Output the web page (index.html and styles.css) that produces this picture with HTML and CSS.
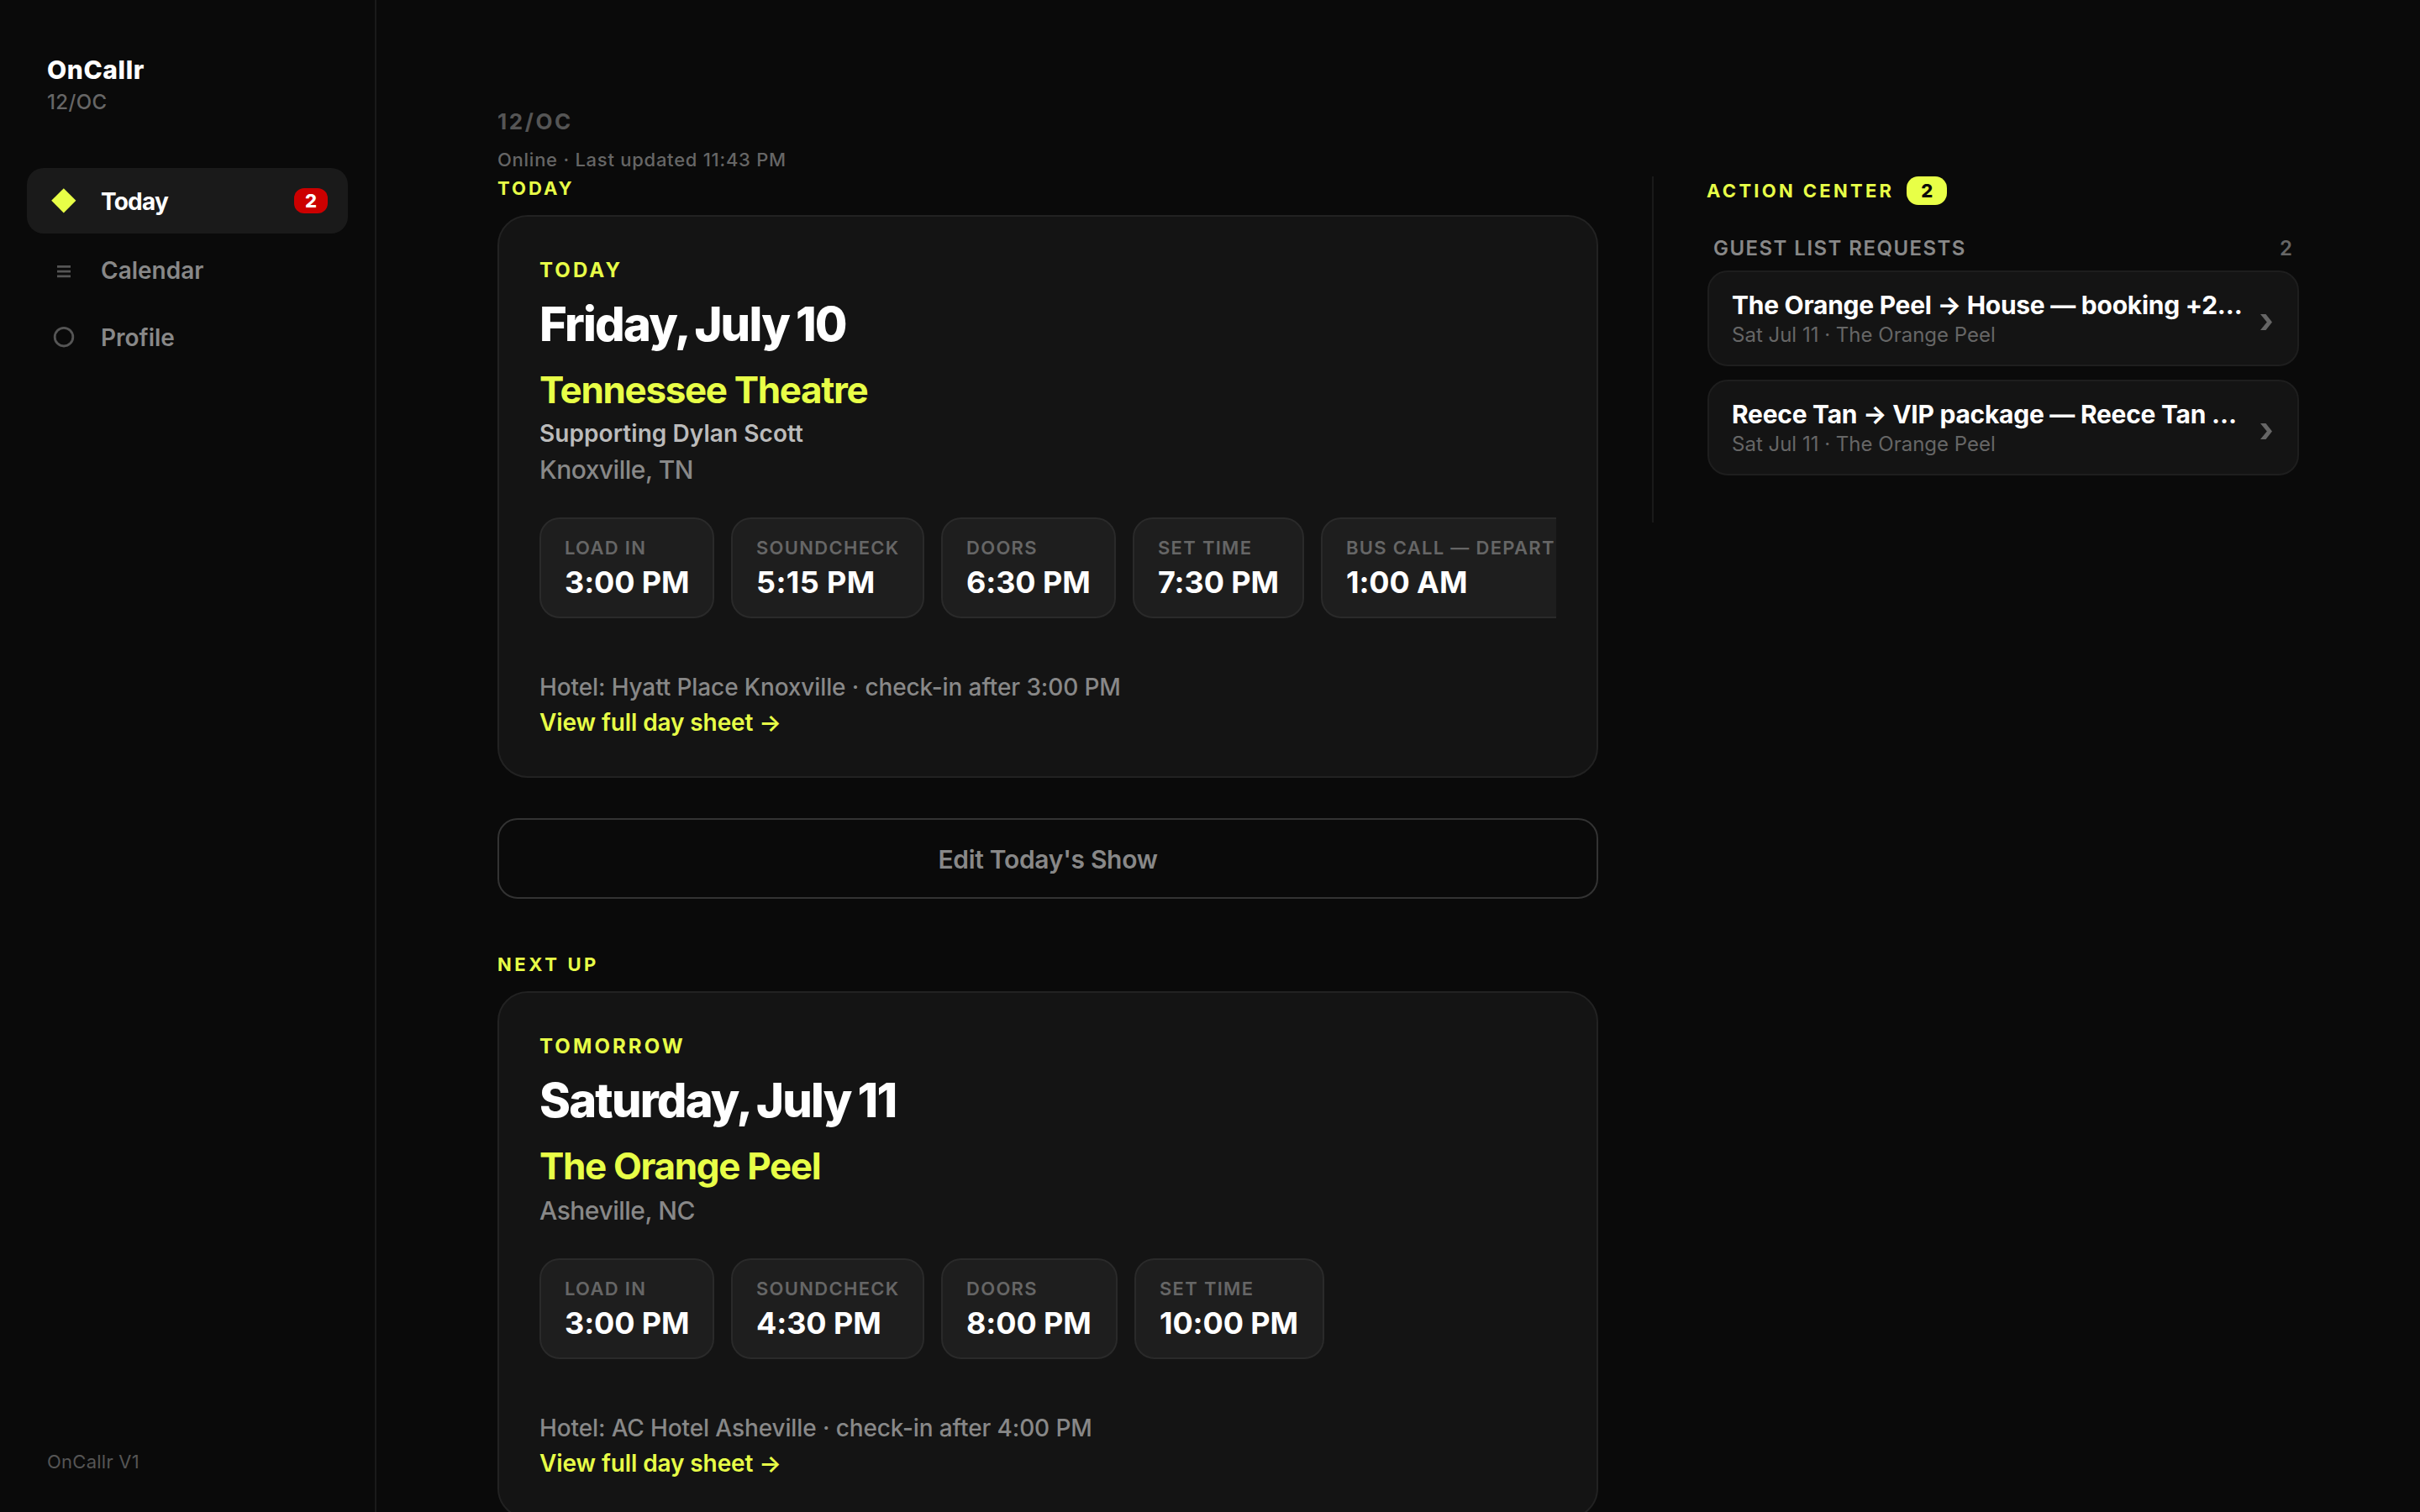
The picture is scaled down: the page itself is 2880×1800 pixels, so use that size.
FILE: index.html
```html
<!DOCTYPE html>
<html lang="en">
<head>
  <meta charset="UTF-8">
  <meta name="viewport" content="width=device-width, initial-scale=1.0">
  <title>OnCallr</title>
  <link rel="stylesheet" href="styles.css">
</head>
<body>
  <div class="app">
    <!-- Sidebar -->
    <aside class="sidebar">
      <div class="brand">
        <div class="brand-name">OnCallr</div>
        <div class="brand-org">12/OC</div>
      </div>
      <nav class="nav">
        <a class="nav-item active">
          <svg class="nav-icon" viewBox="0 0 32 32"><path d="M15.8 1.2 30.4 15.8 15.8 30.4 1.2 15.8z" fill="#e8ff47"/></svg>
          <span class="nav-label nav-today">Today</span>
          <span class="nav-badge">2</span>
        </a>
        <a class="nav-item calendar">
          <svg class="nav-icon" viewBox="0 0 32 32"><path d="M8 11.3h16M8 17.1h16M8 22.9h16" stroke="#555" stroke-width="2.7"/></svg>
          <span class="nav-label">Calendar</span>
        </a>
        <a class="nav-item profile">
          <svg class="nav-icon" viewBox="0 0 32 32"><circle cx="16" cy="15.2" r="10.8" fill="none" stroke="#555" stroke-width="2.8"/></svg>
          <span class="nav-label">Profile</span>
        </a>
      </nav>
      <div class="version">OnCallr V1</div>
    </aside>

    <!-- Main content -->
    <main class="main">
      <div class="shows">
        <div class="org">12/OC</div>
        <div class="sync-status">Online · Last updated 11:43 PM</div>

        <div class="section-label tight">TODAY</div>
        <section class="card">
          <div class="day-label">TODAY</div>
          <h1 class="date">Friday, July 10</h1>
          <h2 class="venue">Tennessee Theatre</h2>
          <div class="support">Supporting Dylan Scott</div>
          <div class="city">Knoxville, TN</div>
          <div class="times">
            <div class="time"><span class="time-label">LOAD IN</span><span class="time-value">3:00 PM</span></div>
            <div class="time"><span class="time-label">SOUNDCHECK</span><span class="time-value wide">5:15 PM</span></div>
            <div class="time"><span class="time-label">DOORS</span><span class="time-value">6:30 PM</span></div>
            <div class="time"><span class="time-label">SET TIME</span><span class="time-value">7:30 PM</span></div>
            <div class="time"><span class="time-label">BUS CALL — DEPART</span><span class="time-value">1:00 AM</span></div>
          </div>
          <div class="hotel">Hotel: Hyatt Place Knoxville · check-in after 3:00 PM</div>
          <a class="day-sheet">View full day sheet →</a>
        </section>

        <button class="edit-button">Edit Today's Show</button>

        <div class="section-label next-up">NEXT UP</div>
        <section class="card">
          <div class="day-label">TOMORROW</div>
          <h1 class="date">Saturday, July 11</h1>
          <h2 class="venue">The Orange Peel</h2>
          <div class="city">Asheville, NC</div>
          <div class="times times-next">
            <div class="time"><span class="time-label">LOAD IN</span><span class="time-value">3:00 PM</span></div>
            <div class="time"><span class="time-label">SOUNDCHECK</span><span class="time-value">4:30 PM</span></div>
            <div class="time"><span class="time-label">DOORS</span><span class="time-value">8:00 PM</span></div>
            <div class="time"><span class="time-label">SET TIME</span><span class="time-value">10:00 PM</span></div>
          </div>
          <div class="hotel">Hotel: AC Hotel Asheville · check-in after 4:00 PM</div>
          <a class="day-sheet">View full day sheet →</a>
        </section>
      </div>

      <!-- Action center -->
      <aside class="actions">
        <div class="actions-head">
          <span class="actions-title">ACTION CENTER</span>
          <span class="actions-count">2</span>
        </div>
        <div class="group-head">
          <span class="group-title">GUEST LIST REQUESTS</span>
          <span class="group-count">2</span>
        </div>
        <div class="request">
          <div class="request-text">
            <div class="request-title">The Orange Peel → House — booking +2…</div>
            <div class="request-sub">Sat Jul 11 · The Orange Peel</div>
          </div>
          <svg class="chevron" viewBox="0 0 14 19"><path d="M0 0h6.5L14 9.5 6.5 19H0l7.8-9.5z" fill="#666"/></svg>
        </div>
        <div class="request">
          <div class="request-text">
            <div class="request-title">Reece Tan → VIP package — Reece Tan …</div>
            <div class="request-sub">Sat Jul 11 · The Orange Peel</div>
          </div>
          <svg class="chevron" viewBox="0 0 14 19"><path d="M0 0h6.5L14 9.5 6.5 19H0l7.8-9.5z" fill="#666"/></svg>
        </div>
      </aside>
    </main>
  </div>
</body>
</html>
```
FILE: styles.css
```css
* {
  box-sizing: border-box;
}

body {
  margin: 0;
  background: #0a0a0a;
  color: #fff;
  font-family: Inter, "Liberation Sans", sans-serif;
  overflow: hidden;
}

.app {
  display: flex;
  height: 1800px;
  overflow: hidden;
}

/* Sidebar */
.sidebar {
  display: flex;
  flex-direction: column;
  width: 448px;
  flex-shrink: 0;
  padding: 64px 32px 40px;
  border-right: 2px solid #1a1a1a;
}

.brand {
  padding: 0 24px;
  height: 136px;
}

.brand-name {
  font-size: 30px;
  line-height: 38px;
  font-weight: 800;
  letter-spacing: 0.6px;
}

.brand-org {
  margin-top: 3px;
  font-size: 24px;
  line-height: 34px;
  font-weight: 500;
  letter-spacing: 0.4px;
  color: #666;
}

.nav {
  display: flex;
  flex-direction: column;
  gap: 4px;
}

.nav-item {
  display: flex;
  align-items: center;
  height: 78px;
  padding: 0 24px 0 28px;
  border-radius: 20px;
}

.nav-item.calendar {
  height: 80px;
}

.nav-item.profile {
  height: 72px;
}

.nav-item.active {
  background: #1a1a1a;
}

.nav-icon {
  width: 32px;
  height: 32px;
  margin-right: 28px;
}

.nav-label {
  font-size: 28px;
  line-height: 34px;
  font-weight: 600;
  color: #888;
}

.nav-item.active .nav-label {
  flex: 1;
  color: #fff;
  font-weight: 700;
}

.nav-item .nav-today {
  padding-top: 2px;
  letter-spacing: -0.8px;
}

.nav-badge {
  width: 40px;
  height: 30px;
  border-radius: 12px;
  background: #c00;
  font-size: 22px;
  line-height: 31px;
  font-weight: 800;
  text-align: center;
}

.version {
  margin-top: auto;
  padding: 0 24px;
  font-size: 22px;
  line-height: 40px;
  letter-spacing: 0.25px;
  color: #555;
}

/* Main */
.main {
  display: flex;
  align-items: flex-start;
  padding: 128px 144px 0;
}

.shows {
  width: 1310px;
}

.org {
  font-size: 26px;
  line-height: 34px;
  font-weight: 700;
  letter-spacing: 2.6px;
  color: #555;
}

.sync-status {
  margin-top: 14px;
  font-size: 22px;
  line-height: 28px;
  font-weight: 500;
  letter-spacing: 0.74px;
  color: #666;
}

.section-label {
  margin-top: 6px;
  font-size: 22px;
  line-height: 28px;
  font-weight: 700;
  letter-spacing: 3.6px;
  color: #e8ff47;
}

.section-label.tight {
  letter-spacing: 3px;
}

.section-label.next-up {
  margin-top: 64px;
}

.card {
  margin-top: 18px;
  padding: 48px;
  background: #141414;
  border: 2px solid #222;
  border-radius: 36px;
}

.day-label {
  font-size: 24px;
  line-height: 32px;
  font-weight: 700;
  letter-spacing: 3.1px;
  color: #e8ff47;
}

.date {
  margin: 14px 0 0;
  font-size: 56px;
  line-height: 68px;
  font-weight: 800;
  letter-spacing: -1.8px;
  word-spacing: -2.5px;
}

.venue {
  margin: 16px 0 0;
  font-size: 44px;
  line-height: 56px;
  font-weight: 700;
  letter-spacing: -1.35px;
  color: #e8ff47;
}

.support {
  margin-top: 6px;
  font-size: 28px;
  line-height: 36px;
  font-weight: 600;
  letter-spacing: 0.06px;
  color: #bbb;
}

.city {
  margin-top: 6px;
  font-size: 30px;
  line-height: 38px;
  font-weight: 500;
  letter-spacing: -0.5px;
  color: #888;
}

.times {
  display: grid;
  grid-template-columns: 208px 230px 208px 204px 320px;
  gap: 20px;
  margin-top: 38px;
  overflow: hidden;
}

.times-next {
  grid-template-columns: 208px 230px 210px 226px;
}

.time {
  display: flex;
  flex-direction: column;
  gap: 6px;
  height: 120px;
  padding: 20px 28px;
  background: #1e1e1e;
  border: 2px solid #2a2a2a;
  border-radius: 24px;
  white-space: nowrap;
}

.time-label {
  font-size: 22px;
  line-height: 28px;
  font-weight: 600;
  letter-spacing: 1.3px;
  color: #666;
}

.time-value {
  font-size: 36px;
  line-height: 42px;
  font-weight: 700;
  letter-spacing: -0.1px;
}

.time-value.wide {
  letter-spacing: 0.4px;
}

.hotel {
  margin-top: 65px;
  font-size: 28px;
  line-height: 34px;
  font-weight: 500;
  letter-spacing: -0.12px;
  color: #888;
}

.day-sheet {
  display: block;
  margin-top: 9px;
  font-size: 28px;
  line-height: 32px;
  font-weight: 600;
  letter-spacing: -0.1px;
  color: #e8ff47;
}

.edit-button {
  display: block;
  width: 100%;
  height: 96px;
  margin-top: 48px;
  padding-top: 3px;
  background: transparent;
  border: 2px solid #333;
  border-radius: 24px;
  font-family: inherit;
  font-size: 30px;
  font-weight: 600;
  letter-spacing: -0.3px;
  color: #888;
}

/* Action center */
.actions {
  width: 770px;
  margin: 82px 0 0 64px;
  padding: 0 0 56px 64px;
  border-left: 2px solid #1a1a1a;
}

.actions-head {
  display: flex;
  align-items: center;
  height: 34px;
}

.actions-title {
  margin-left: -1px;
  font-size: 22px;
  line-height: 35px;
  font-weight: 700;
  letter-spacing: 3.3px;
  color: #e8ff47;
}

.actions-count {
  width: 48px;
  height: 34px;
  margin-left: 15px;
  border-radius: 14px;
  background: #e8ff47;
  color: #0a0a0a;
  font-size: 22px;
  line-height: 35px;
  font-weight: 800;
  text-align: center;
}

.group-head {
  display: flex;
  justify-content: space-between;
  margin-top: 36px;
  padding: 0 8px 0 7px;
  font-size: 24px;
  line-height: 32px;
  font-weight: 600;
}

.group-title {
  letter-spacing: 1.45px;
  color: #888;
}

.group-count {
  color: #666;
}

.request {
  display: flex;
  align-items: center;
  justify-content: space-between;
  height: 114px;
  margin-top: 10px;
  padding: 0 30px 0 27px;
  background: #141414;
  border: 2px solid #1e1e1e;
  border-radius: 24px;
}

.request + .request {
  margin-top: 16px;
}

.request-title {
  padding-top: 2px;
  font-size: 30px;
  line-height: 38px;
  font-weight: 700;
  letter-spacing: -0.27px;
  white-space: nowrap;
}

.request-sub {
  font-size: 24px;
  line-height: 34px;
  color: #666;
}

.chevron {
  width: 14px;
  height: 19px;
  margin-top: 8px;
}
```
